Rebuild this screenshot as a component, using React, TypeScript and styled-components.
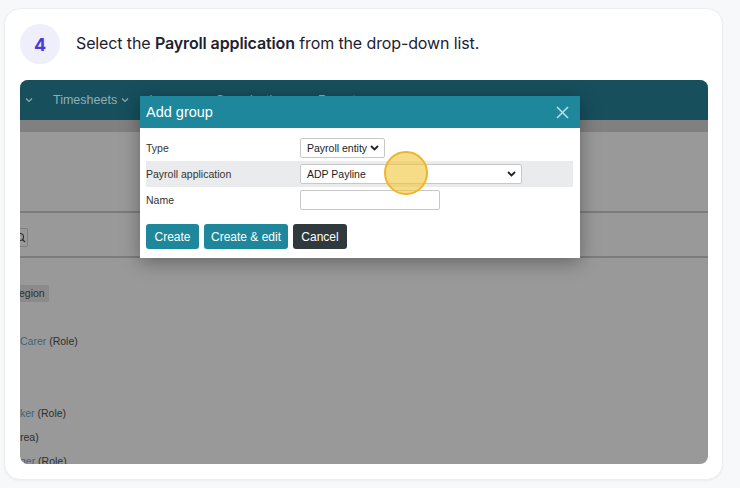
import React from "react";
import styled, { createGlobalStyle } from "styled-components";

const GlobalStyle = createGlobalStyle`
  body {
    margin: 0;
    background: #f7f8fa;
    font-family: Inter, "Liberation Sans", sans-serif;
  }
`;

const Page = styled.div`
  width: 740px;
  height: 488px;
  padding: 8px 17px 8px 4px;
  box-sizing: border-box;
`;

const Card = styled.div`
  background: #fff;
  border: 1px solid #eceef2;
  border-radius: 16px;
  box-shadow: 0 1px 2px rgba(16, 24, 40, 0.05);
  padding: 15px 14px 15px 15px;
  display: flex;
  flex-direction: column;
  gap: 16px;
  height: 100%;
  box-sizing: border-box;
`;

const StepHeader = styled.div`
  display: flex;
  align-items: center;
  gap: 16px;
  height: 40px;
`;

const StepBadge = styled.div`
  width: 40px;
  height: 40px;
  border-radius: 50%;
  background: #efeffc;
  color: #4a3bd6;
  font-weight: 700;
  font-size: 18px;
  display: flex;
  align-items: center;
  justify-content: center;
`;

const StepText = styled.p`
  margin: 0 0 2px;
  font-size: 16px;
  letter-spacing: -0.12px;
  color: #1d2230;
  b {
    font-weight: 600;
  }
`;

/* ---- screenshot mock ---- */

const Shot = styled.div`
  position: relative;
  height: 384px;
  border-radius: 8px;
  overflow: hidden;
  background: #999;
  font-family: "Liberation Sans", Arial, sans-serif;
  font-size: 10.5px;
  display: flex;
  flex-direction: column;
`;

const NavBar = styled.div`
  height: 40px;
  flex: none;
  background: #174f5d;
  display: flex;
  align-items: center;
  gap: 20px;
  padding-left: 5px;
  color: #93aeb5;
  font-size: 12.5px;
`;

const NavItem = styled.span`
  display: inline-flex;
  align-items: center;
  gap: 4px;
`;

const Caret = () => (
  <svg width="8" height="6" viewBox="0 0 8 6">
    <path d="M1 1.5 L4 4.5 L7 1.5" fill="none" stroke="currentColor" strokeWidth="1.1" />
  </svg>
);

const Band = styled.div`
  height: 12px;
  flex: none;
  background: #808080;
`;

const Section = styled.div<{ $h: number; $line?: boolean }>`
  height: ${(p) => p.$h}px;
  flex: none;
  border-bottom: ${(p) => (p.$line ? "2px solid #7c7c7c" : "none")};
  box-sizing: border-box;
  display: flex;
  align-items: center;
`;

const SearchStub = styled.div`
  width: 7px;
  height: 17px;
  border: 1px solid #7e7e7e;
  border-left: none;
  border-radius: 0 2px 2px 0;
  overflow: hidden;
  display: flex;
  align-items: center;
  justify-content: flex-end;
  margin-top: 6px;
`;

const List = styled.div`
  display: flex;
  flex-direction: column;
  color: #2e2e2e;
  font-size: 10.5px;
  padding-top: 27px;
`;

const Tag = styled.span`
  align-self: flex-start;
  background: #8b8b8b;
  padding: 2px 4px 2px 0;
  line-height: 13px;
  margin-left: -1px;
`;

const Line = styled.div<{ $gap: number }>`
  margin-top: ${(p) => p.$gap}px;
  line-height: 14px;
  white-space: nowrap;
`;

const Link = styled.span`
  color: #3f6573;
`;

/* ---- modal ---- */

const Modal = styled.div`
  position: absolute;
  left: 120px;
  top: 16px;
  width: 440px;
  background: #fff;
  box-shadow: 0 4px 18px rgba(0, 0, 0, 0.35);
`;

const ModalHeader = styled.div`
  height: 32px;
  background: #1f879b;
  color: #fff;
  font-size: 14.5px;
  display: flex;
  align-items: center;
  justify-content: space-between;
  padding: 0 11px 0 6px;
`;

const ModalBody = styled.div`
  padding: 7px 7px 9px 6px;
`;

const FormRow = styled.div<{ $shade?: boolean }>`
  height: 26px;
  display: flex;
  align-items: center;
  background: ${(p) => (p.$shade ? "#e9ebec" : "transparent")};
  color: #333;
`;

const Label = styled.span`
  width: 154px;
  flex: none;
`;

const Select = styled.div<{ $w: number }>`
  width: ${(p) => p.$w}px;
  height: 20px;
  box-sizing: border-box;
  border: 1px solid #c8c8c8;
  border-radius: 2px;
  background: #fff;
  display: flex;
  align-items: center;
  justify-content: space-between;
  padding: 0 5px 0 6px;
  color: #222;
  white-space: nowrap;
`;

const TextInput = styled.div`
  width: 140px;
  height: 20px;
  box-sizing: border-box;
  border: 1px solid #c8c8c8;
  border-radius: 2px;
`;

const Buttons = styled.div`
  display: flex;
  gap: 5px;
  margin-top: 11px;
`;

const Button = styled.div<{ $dark?: boolean; $w: number }>`
  width: ${(p) => p.$w}px;
  height: 25px;
  border-radius: 3px;
  background: ${(p) => (p.$dark ? "#30393d" : "#1f879b")};
  color: #fff;
  font-size: 12px;
  display: flex;
  align-items: center;
  justify-content: center;
`;

const Highlight = styled.div`
  position: absolute;
  left: 364px;
  top: 71px;
  width: 44px;
  height: 44px;
  box-sizing: border-box;
  border-radius: 50%;
  border: 2px solid #f0b429;
  background: rgba(242, 196, 55, 0.6);
`;

const SelectChevron = () => (
  <svg width="9" height="6" viewBox="0 0 9 6">
    <path d="M1 1 L4.5 4.5 L8 1" fill="none" stroke="#222" strokeWidth="1.8" />
  </svg>
);

const CloseIcon = () => (
  <svg width="13" height="13" viewBox="0 0 13 13">
    <path d="M1 1 L12 12 M12 1 L1 12" stroke="#b9dde5" strokeWidth="1.6" />
  </svg>
);

const MagnifierStub = () => (
  <svg width="7" height="10" viewBox="0 0 7 10">
    <circle cx="0" cy="4" r="3.5" fill="none" stroke="#2e2e2e" strokeWidth="1.1" />
    <path d="M2.5 6.5 L5 9" stroke="#2e2e2e" strokeWidth="1.2" />
  </svg>
);

export default function App() {
  return (
    <Page>
      <GlobalStyle />
      <Card>
        <StepHeader>
          <StepBadge>4</StepBadge>
          <StepText>
            Select the <b>Payroll application</b> from the drop-down list.
          </StepText>
        </StepHeader>

        <Shot>
          <NavBar>
            <NavItem>
              <Caret />
            </NavItem>
            <NavItem>
              Timesheets <Caret />
            </NavItem>
            <NavItem>
              Leave <Caret />
            </NavItem>
            <NavItem>
              Organisation <Caret />
            </NavItem>
            <NavItem>
              Reports <Caret />
            </NavItem>
          </NavBar>
          <Band />
          <Section $h={81} $line />
          <Section $h={45} $line>
            <SearchStub>
              <MagnifierStub />
            </SearchStub>
          </Section>
          <List>
            <Tag>egion</Tag>
            <Line $gap={32}>
              <Link>Carer</Link> (Role)
            </Line>
            <Line $gap={58}>
              <Link>ker</Link> (Role)
            </Line>
            <Line $gap={10}>rea)</Line>
            <Line $gap={10}>
              <Link>ger</Link> (Role)
            </Line>
          </List>

          <Modal>
            <ModalHeader>
              Add group
              <CloseIcon />
            </ModalHeader>
            <ModalBody>
              <FormRow>
                <Label>Type</Label>
                <Select $w={85}>
                  Payroll entity
                  <SelectChevron />
                </Select>
              </FormRow>
              <FormRow $shade>
                <Label>Payroll application</Label>
                <Select $w={222}>
                  ADP Payline
                  <SelectChevron />
                </Select>
              </FormRow>
              <FormRow>
                <Label>Name</Label>
                <TextInput />
              </FormRow>
              <Buttons>
                <Button $w={53}>Create</Button>
                <Button $w={84}>Create &amp; edit</Button>
                <Button $w={54} $dark>
                  Cancel
                </Button>
              </Buttons>
            </ModalBody>
          </Modal>
          <Highlight />
        </Shot>
      </Card>
    </Page>
  );
}
